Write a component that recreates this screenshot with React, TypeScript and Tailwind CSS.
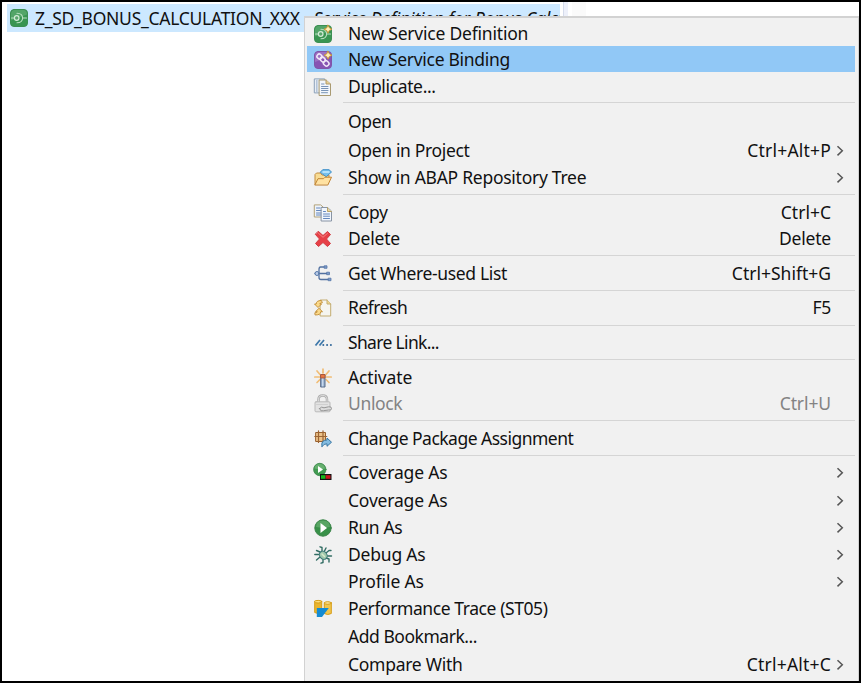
import type { ReactNode } from "react";

const svgClass = "block h-[18px] w-[18px] shrink-0 overflow-visible";

function Svg({ children }: { children: ReactNode }) {
  return (
    <svg viewBox="0 0 18 18" className={svgClass} fill="none" strokeLinecap="round" strokeLinejoin="round">
      {children}
    </svg>
  );
}

function Sparkle() {
  return <path d="M14 .2l1.3 2.6L18 4.2l-2.700 1.3L14 8.2l-1.300-2.700L10 4.2l2.700-1.400z" fill="#fff0b8" stroke="#c79332" strokeWidth=".9" />;
}

function ServiceGlyph() {
  return (
    <>
      <rect x=".5" y=".5" width="17" height="17" rx="3.5" fill="#399552" stroke="#3b8f52" />
      <path d="M1 5.5Q1 1 5 1h8q4 0 4 4.5-8 3-16 6z" fill="#65b078" opacity=".6" />
      <path d="M1.500 9h2M12.500 9h4M7 4.200c7.500 0 7.500 9.600 0 9.600" stroke="#bce0c3" strokeWidth="1.1" />
      <circle cx="6.700" cy="9" r="2.300" fill="#5aa56c" stroke="#d5ecd9" strokeWidth="1.200" />
    </>
  );
}

const icons: Record<string, ReactNode> = {
  service: <Svg><ServiceGlyph /></Svg>,
  newService: <Svg><ServiceGlyph /><Sparkle /></Svg>,
  binding: (
    <Svg>
      <rect x=".5" y=".5" width="17" height="17" rx="3.5" fill="#8753b3" stroke="#7f55a8" />
      <path d="M1 5Q1 1 5 1h8q4 0 4 4-8 3-16 6z" fill="#aa84cb" opacity=".6" />
      <g stroke="#f1e8f8" strokeWidth="1.500">
        <rect x="3" y="3.300" width="5" height="4.500" rx="2" transform="rotate(40 5.500 5.500)" />
        <rect x="6" y="6.500" width="5.500" height="4" rx="2" transform="rotate(45 8.700 8.500)" />
        <rect x="9.500" y="10" width="5.500" height="4.700" rx="2" transform="rotate(45 12.200 12.300)" />
      </g>
      <Sparkle />
    </Svg>
  ),
  duplicate: (
    <Svg>
      <path d="M.7.900h10v14H.7z" fill="#e8eef5" stroke="#8ba0b9" />
      <path d="M2.800 2.500v12" stroke="#6f8db3" strokeWidth="1.300" strokeLinecap="butt" strokeDasharray="1 1" />
      <path d="M5.500 2H12l4.500 4v11.500h-11z" fill="#f2f6fb" stroke="#a99a72" />
      <path d="M12 2v4h4.500" fill="#e7cf91" stroke="#b19a68" />
      <path d="M7.500 6h2.500M7.500 8.500h6.500M7.500 10.500h6.500M7.500 12.500h6.500M7.500 14.700h6" stroke="#7893b6" />
    </Svg>
  ),
  folder: (
    <Svg>
      <path d="M1 15.500V5.500l1.500-1.500h4l1.500 2h7v3" fill="#f8dc94" stroke="#c28a3c" />
      <path d="M6.500 3l2.200-2.300h6.300L17.500 3 12.500 7.500z" fill="#74c0ed" stroke="#3d8fc9" />
      <path d="M9 3h6" stroke="#c7edff" strokeWidth="1.300" />
      <path d="M1 15.700l3-6h5.500l1.500-1.500h6.500L14 15.700z" fill="#ffe2a2" stroke="#c28433" />
    </Svg>
  ),
  copy: (
    <Svg>
      <path d="M.7.900h6l3.300 3V13H.7z" fill="#edf3fb" stroke="#b2a278" />
      <path d="M2.500 4H6M2.500 6.500H8M2.500 9H8M2.500 11H8" stroke="#6487bd" />
      <path d="M7.500 3.500h6l4 3.500v10H7.500z" fill="#f1f6fd" stroke="#8894a4" />
      <path d="M13.500 3.500v4h4" fill="#ead79f" stroke="#b8a36c" />
      <path d="M9.500 7.500h2M9.500 10h6M9.500 12.200h6M9.500 14.500h6" stroke="#6487bd" />
    </Svg>
  ),
  delete: (
    <Svg>
      <path d="M4.500 1.500L9 5.500l4.500-4 3 3L12.500 9l4 4.500-3 3L9 12.500l-4.500 4-3-3L5.500 9l-4-4.500z" fill="#e64047" stroke="#d33b42" />
      <path d="M4.500 3.300L9 7.300l4.500-4" stroke="#f58381" />
    </Svg>
  ),
  references: (
    <Svg>
      <path d="M12 2H6.500Q5 2 5 4.500V12.500q0 2 2 2H15M1 8.500h13.500" stroke="#5271a1" strokeWidth="1.300" />
      <circle cx="3" cy="8.500" r="2" fill="#b9cbe6" stroke="#5577aa" />
      <path d="M10.500.800h2.500v2.500h-2.500zM13 7.200h2.500v2.500H13zM14.500 13.200H17v2.500h-2.500z" fill="#7f9ac8" stroke="#5577aa" strokeWidth=".8" />
    </Svg>
  ),
  refresh: (
    <Svg>
      <path d="M6.500 1H13l3.700 4v12H6.500z" fill="#f5f5f0" stroke="#c4ad72" />
      <path d="M13 1v4h3.700" fill="#efd88e" stroke="#c4ad72" />
      <path d="M7 1.500Q2.200 1.500 2.200 5H.5L4 8.500 7.500 5H5.700Q5.700 4 8 3.800z" fill="#fbd98a" stroke="#c08a30" strokeWidth=".9" />
      <path d="M1.500 16Q6.800 16 6.800 12.700h1.700L5 9.300 1.500 12.700h1.800Q3.300 13.700 1.200 13.800z" fill="#fbd98a" stroke="#c08a30" strokeWidth=".9" />
    </Svg>
  ),
  share: (
    <Svg>
      <path d="M1.500 11.500L6 6M5.500 11.500L10 6" stroke="#3f79ab" strokeWidth="1.800" strokeLinecap="butt" />
      <path d="M9.200 11h.2M13 11h.2M16.800 11h.2" stroke="#376b9c" strokeWidth="1.800" />
    </Svg>
  ),
  activate: (
    <Svg>
      <path d="M9 4V.2M6 5.500L3 2M12 5.500L15 2M5.500 8H.8M12.500 8h4.700M6 10.500L3 13.500M12 10.500l3 3" stroke="#f1bd76" strokeWidth="1.700" />
      <path d="M7 6h4v12H7z" fill="#8fa9c9" stroke="#5d6e89" />
      <path d="M7 5.500h4v3.500H7z" fill="#e8763f" stroke="#a8583e" />
      <path d="M8.800 10v7" stroke="#e2edf9" />
    </Svg>
  ),
  unlock: (
    <Svg>
      <path d="M4.500 8V4.500q0-4 4.300-4T13 4.500V8" stroke="#acacac" strokeWidth="2.500" />
      <path d="M4.500 8V4.500q0-4 4.300-4T13 4.500V8" stroke="#e8e8e8" strokeWidth=".8" />
      <rect x="1" y="6.800" width="15" height="10" rx="1" fill="#e2e2e2" stroke="#bababa" />
      <path d="M2.500 9.500h11" stroke="#cfcfcf" />
      <path d="M5.500 13.500q2-2.500 4.500-.7l4.500-1q3-.5 3 1.700t-3 1.500l-5 .7q-3 1.500-4-2.200z" fill="#dcdcdc" stroke="#969696" />
    </Svg>
  ),
  package: (
    <Svg>
      <path d="M2 2.500h9.500V11.500H2z" fill="#ecc187" stroke="#99602e" />
      <path d="M4.500.8V12.500M9 .8V12.500M.8 6.500h12" stroke="#9c6534" strokeWidth="1.200" />
      <path d="M8 16.500q-1.500-6.500 5-6.500V8l4.500 4.200L13 16.300v-2.500q-3-.3-5 2.700z" fill="#83bce1" stroke="#3776a3" />
    </Svg>
  ),
  coverage: (
    <Svg>
      <circle cx="5.800" cy="5.500" r="6.200" fill="#419a51" stroke="#3a8649" strokeWidth=".8" />
      <path d="M.5 4.500Q1 0 5.800 0T11 4.500q-5 1.500-10.500 0z" fill="#80c083" opacity=".6" />
      <path d="M4 2L9 5.500 4 9z" fill="#fff" />
      <path d="M6 10h11.500v6H6z" fill="#111" />
      <path d="M7 11.200h4.500v3.600H7z" fill="#16b71b" />
      <path d="M11.700 11.200h4.800v3.600h-4.800z" fill="#c91420" />
    </Svg>
  ),
  run: (
    <Svg>
      <circle cx="9" cy="9" r="8.200" fill="#389048" stroke="#3a8548" />
      <path d="M2 8q0-6.500 7-6.500T16 8q-7 1-14 0z" fill="#78b97e" opacity=".5" />
      <path d="M6.500 4l6.500 5-6.500 5z" fill="#fff" />
    </Svg>
  ),
  debug: (
    <Svg>
      <path d="M6 6L2.500 4.500M6 8.500H.8M6 11l-3.500 3M8 6V1.500L6 .8M10 6l2-4M12 7l3-2.500h2M13 10h4.500M12 12l3 1v3M9 13v3.500l-2 .7" stroke="#326d64" strokeWidth="1.400" />
      <ellipse cx="9.300" cy="9.300" rx="3.600" ry="4.300" transform="rotate(-40 9.300 9.300)" fill="#9fc6ac" stroke="#3a7775" />
      <path d="M8 8l2.500 2.500" stroke="#d7ebca" strokeWidth="1.500" />
    </Svg>
  ),
  trace: (
    <Svg>
      <path d="M.7 1.500v11q3.500 2 7 0v-11z" fill="#eab52e" stroke="#d69d17" />
      <ellipse cx="4.200" cy="1.700" rx="3.500" ry="1.300" fill="#ffdf7d" stroke="#d69d17" />
      <path d="M10.300 3v10.500q3.500 2 7 0V3z" fill="#f2c64d" stroke="#d69d17" />
      <ellipse cx="13.800" cy="3" rx="3.500" ry="1.300" fill="#ffe69a" stroke="#d69d17" />
      <path d="M2.800 8h12L8 17H2.800z" fill="#148bd3" />
    </Svg>
  ),
};

type Item = { label: string; gap: string; track?: string; icon?: string; keys?: string; keyTrack?: string; sub?: boolean; state?: "active" | "disabled" };
type Entry = Item | { line: string };

const entries: Entry[] = [
  { label: "New Service Definition", gap: "mt-0 pt-0.5", track: "tracking-[-0.21px]", icon: "newService" },
  { label: "New Service Binding", gap: "mt-0 pt-0.5", track: "tracking-[-0.3px]", icon: "binding", state: "active" },
  { label: "Duplicate...", gap: "mt-0.5", icon: "duplicate" },
  { line: "mt-0.5" },
  { label: "Open", gap: "mt-1.5", track: "tracking-[-0.4px]" },
  { label: "Open in Project", gap: "mt-[3px]", keys: "Ctrl+Alt+P", keyTrack: "tracking-[0.2px]", sub: true },
  { label: "Show in ABAP Repository Tree", gap: "mt-px", track: "tracking-[-0.27px]", icon: "folder", sub: true },
  { line: "mt-[3px]" },
  { label: "Copy", gap: "mt-[5px]", icon: "copy", keys: "Ctrl+C", keyTrack: "tracking-[0px]" },
  { label: "Delete", gap: "mt-0", track: "tracking-[-0.2px]", icon: "delete", keys: "Delete", keyTrack: "tracking-[-0.2px]" },
  { line: "mt-[3px]" },
  { label: "Get Where-used List", gap: "mt-[5px]", icon: "references", keys: "Ctrl+Shift+G", keyTrack: "tracking-[0px]" },
  { line: "mt-[3px]" },
  { label: "Refresh", gap: "mt-1", track: "tracking-[-0.5px]", icon: "refresh", keys: "F5" },
  { line: "mt-1" },
  { label: "Share Link...", gap: "mt-1", track: "tracking-[-0.66px]", icon: "share" },
  { line: "mt-[3px]" },
  { label: "Activate", gap: "mt-[5px]", track: "tracking-[-0.15px]", icon: "activate" },
  { label: "Unlock", gap: "mt-0", icon: "unlock", keys: "Ctrl+U", keyTrack: "tracking-[-0.1px]", state: "disabled" },
  { line: "mt-[3px]" },
  { label: "Change Package Assignment", gap: "mt-[5px]", track: "tracking-[-0.52px]", icon: "package" },
  { line: "mt-[3px]" },
  { label: "Coverage As", gap: "mt-1", track: "tracking-[-0.19px]", icon: "coverage", sub: true },
  { label: "Coverage As", gap: "mt-0.5", track: "tracking-[-0.19px]", sub: true },
  { label: "Run As", gap: "mt-px", track: "tracking-[-0.42px]", icon: "run", sub: true },
  { label: "Debug As", gap: "mt-px", track: "tracking-[-0.2px]", icon: "debug", sub: true },
  { label: "Profile As", gap: "mt-px", track: "tracking-[-0.12px]", sub: true },
  { label: "Performance Trace (ST05)", gap: "mt-px", track: "tracking-[-0.42px]", icon: "trace" },
  { label: "Add Bookmark...", gap: "mt-0.5", track: "tracking-[-0.47px]" },
  { label: "Compare With", gap: "mt-0.5", track: "tracking-[-0.27px]", keys: "Ctrl+Alt+C", keyTrack: "tracking-[0.2px]", sub: true },
];

function MenuRow({ item }: { item: Item }) {
  const bg = item.state === "active" ? "bg-[#91c8f6]" : "";
  const color = item.state === "disabled" ? "text-[#838383]" : "text-[#111]";
  return (
    <div className={`mr-[3px] ml-0.5 flex h-[26px] items-center pl-[7px] ${item.gap} ${bg} ${color}`}>
      <span className="w-[18px] shrink-0">{item.icon && icons[item.icon]}</span>
      <span className={`ml-4 flex-1 pb-0.5 ${item.track ?? ""}`}>{item.label}</span>
      <span className={`pb-0.5 ${item.keyTrack ?? ""}`}>{item.keys}</span>
      <span className="ml-[5px] w-[19px]">
        {item.sub && (
          <svg viewBox="0 0 8 12" className="block h-3 w-2" fill="none" stroke="#555" strokeWidth="1.5">
            <path d="M1.500 1.200L6.300 5.800 1.500 10.400" />
          </svg>
        )}
      </span>
    </div>
  );
}

export default function App() {
  return (
    <div className="relative h-[683px] w-[861px] overflow-hidden border-2 border-black bg-white font-['Noto_Sans','Segoe_UI',sans-serif] text-[17.5px] leading-[26px] tracking-[-0.35px] whitespace-nowrap text-[#111]">
      <div className="mt-[2px] ml-[5px] flex h-7 w-[553px] items-center overflow-hidden bg-[#cce8ff] pl-[3px]">
        {icons.service}
        <span className="ml-[7px] tracking-[-0.27px]">Z_SD_BONUS_CALCULATION_XXX</span>
        <span className="ml-3.5 tracking-[-0.2px] italic">Service Definition for Bonus Calculation</span>
      </div>
      <div className="absolute top-0 left-[561px] h-4 w-[5px] border-l border-[#d5dbeb] bg-[#edf0fa]" />
      <div className="absolute top-0 left-[570px] h-4 w-[14px] bg-[#fafafa]" />
      <div className="absolute top-[14px] left-[302px] h-[665px] w-[555px] border-t-2 border-r border-l border-[#d2d2d2] bg-[#f1f1f1] pt-[2px]">
        {entries.map((entry, i) =>
          "line" in entry ? (
            <div key={i} className={`mr-[3px] ml-[38px] h-px bg-[#d5d5d5] ${entry.line}`} />
          ) : (
            <MenuRow key={i} item={entry} />
          ),
        )}
      </div>
    </div>
  );
}
